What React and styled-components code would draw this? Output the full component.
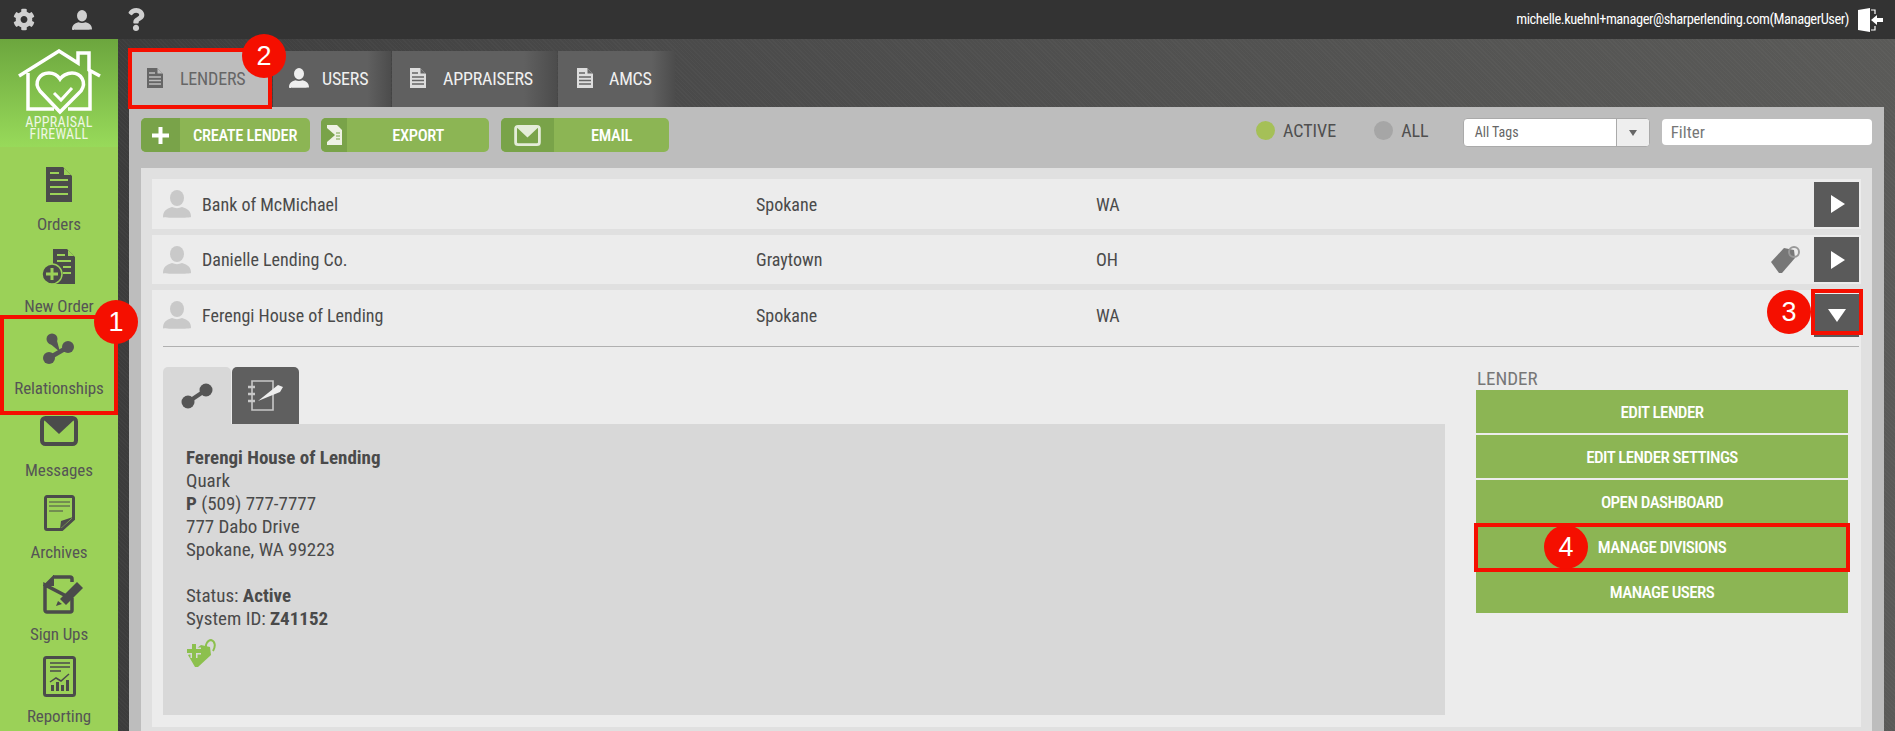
import React from 'react'
import styled, { createGlobalStyle } from 'styled-components'
import { FaCog, FaQuestion } from 'react-icons/fa'

const GlobalStyle = createGlobalStyle`
  html, body { margin: 0; padding: 0; background: #3c3c3c; }
  body { font-family: Roboto, "Liberation Sans", sans-serif; font-stretch: 75%; overflow: hidden; }
  * { box-sizing: border-box; }
`

const Page = styled.div`
  position: relative;
  width: 1895px;
  height: 731px;
  overflow: hidden;
`
const TopBar = styled.header`
  height: 39px;
  background: #333;
  display: flex;
  align-items: center;
  padding: 0 12px 0 13px;
  color: #fff;
`
const TopIcon = styled.span`
  display: flex;
  justify-content: center;
  width: 22px;
  margin-right: ${p => p.$gap}px;
  color: #cfcfcf;
  font-size: 23px;
`
const UserLabel = styled.span`
  margin-left: auto;
  margin-right: 9px;
  font-size: 14.5px;
  letter-spacing: -0.45px;
  color: #fff;
`
const Body = styled.div`
  display: flex;
  height: 692px;
`
const Sidebar = styled.nav`
  width: 118px;
  flex: none;
  background: #9bd158;
`
const Logo = styled.div`
  height: 108px;
  background: linear-gradient(#6ca63e, #98da5a);
  display: flex;
  flex-direction: column;
  align-items: center;
  padding-top: 10px;
  color: #eef7e4;
  font-size: 14px;
  line-height: 12px;
  letter-spacing: 0.3px;
`
const LogoMark = styled.svg`
  width: 83px;
  height: 66px;
  margin-bottom: 1px;
`
const NavList = styled.div`
  padding-top: 8px;
`
const NavItem = styled.div`
  height: 82px;
  display: flex;
  flex-direction: column;
  align-items: center;
  color: #555;
  font-size: 17px;
  letter-spacing: -0.1px;
`
const NavGlyph = styled.div`
  height: 59px;
  display: flex;
  align-items: center;
  justify-content: center;
  margin-left: ${p => p.$shift || 0}px;
`
const Main = styled.main`
  flex: 1;
  padding: 12px 11px 0;
  background:
    repeating-linear-gradient(45deg, rgba(255,255,255,.025) 0 1px, transparent 1px 3px),
    linear-gradient(90deg, #3c3c3c 0, #4a4a4a 30%, #5a5a58 100%);
`
const Tabs = styled.div`
  display: flex;
  height: 56px;
`
const Tab = styled.div`
  display: flex;
  align-items: center;
  width: ${p => p.$width}px;
  padding: 0 0 2px ${p => p.$pad}px;
  margin-right: 1px;
  font-size: 18px;
  letter-spacing: -0.2px;
  color: ${p => (p.$active ? '#666' : '#f0f0f0')};
  background: ${p => (p.$active ? '#bdbdbd' : 'linear-gradient(90deg, #606060 80%, #4c4c4c)')};
  svg { margin-right: ${p => p.$iconGap}px; }
`
const Panel = styled.section`
  background: #bdbdbd;
  height: 624px;
  padding: 0 12px;
`
const Toolbar = styled.div`
  height: 61px;
  display: flex;
  padding-top: 11px;
`
const ActionButton = styled.button`
  display: flex;
  width: ${p => p.$width}px;
  height: 34px;
  margin-right: ${p => p.$gap}px;
  padding: 0;
  border: none;
  border-radius: 5px;
  overflow: hidden;
  background: #8cb554;
  color: #fff;
  font: inherit;
  font-size: 16.5px;
  font-weight: 500;
  letter-spacing: -0.35px;
`
const ActionIcon = styled.span`
  width: ${p => p.$width}px;
  height: 100%;
  flex: none;
  display: flex;
  align-items: center;
  justify-content: center;
  background: #79a349;
`
const ActionText = styled.span`
  flex: 1;
  align-self: center;
  text-align: center;
`
const Radio = styled.div`
  display: flex;
  align-items: center;
  height: 24px;
  margin-left: ${p => p.$left}px;
  font-size: 18px;
  color: #4f4f4f;
  &::before {
    content: '';
    width: 19px;
    height: 19px;
    border-radius: 50%;
    margin-right: 8px;
    background: ${p => (p.$on ? '#a5c057' : '#a6a6a6')};
  }
`
const TagSelect = styled.div`
  display: flex;
  width: 187px;
  height: 29px;
  margin-left: 34px;
  border: 1px solid #aaa;
  border-radius: 4px;
  overflow: hidden;
  background: #fff;
  font-size: 14px;
  color: #666;
`
const TagValue = styled.span`
  flex: 1;
  padding-left: 11px;
  line-height: 27px;
  border-right: 1px solid #aaa;
`
const TagArrow = styled.span`
  width: 32px;
  background: #eee;
  display: flex;
  align-items: center;
  justify-content: center;
  &::after {
    content: '';
    border: 4px solid transparent;
    border-top: 6px solid #666;
    margin-top: 5px;
  }
`
const FilterInput = styled.input`
  width: 210px;
  height: 26px;
  margin: 1px 0 0 12px;
  border: none;
  border-radius: 4px;
  padding: 0 9px;
  font: inherit;
  font-size: 17px;
  &::placeholder { color: #777; opacity: 1; }
`
const RowList = styled.div`
  background: #e0e0e0;
  height: 563px;
  padding: 11px 11px 0;
  display: flex;
  flex-direction: column;
  gap: 6px;
`
const RowBox = styled.div`
  background: #ececec;
  flex: none;
`
const RowHead = styled.div`
  display: grid;
  grid-template-columns: 39px 554px 340px 1fr auto 45px;
  align-items: center;
  height: ${p => p.$height}px;
  padding: 0 2px 0 11px;
  font-size: 18px;
  color: #4a4a4a;
`
const ExpandButton = styled.div`
  width: 45px;
  height: ${p => p.$height}px;
  background: #5a5a5a;
  display: flex;
  align-items: center;
  justify-content: center;
  &::after {
    content: '';
    border-style: solid;
    ${p => p.$open
      ? 'border-width: 13px 9px 0; border-color: #fff transparent transparent;'
      : 'border-width: 9px 0 9px 14px; border-color: transparent transparent transparent #fff; margin-left: 2px;'}
  }
`
const TagSlot = styled.span`
  display: flex;
  margin: 0 13px 2px 0;
`
const Divider = styled.div`
  height: 1px;
  margin: 6px 2px 0 11px;
  background: #b0b0b0;
`
const Detail = styled.div`
  display: flex;
  padding: 20px 13px 12px 11px;
`
const InfoColumn = styled.div`
  width: 1282px;
`
const InfoTabs = styled.div`
  display: flex;
  height: 57px;
`
const InfoTab = styled.div`
  width: ${p => p.$width}px;
  margin-right: 1px;
  border-radius: 5px 5px 0 0;
  background: ${p => (p.$active ? '#d8d8d8' : '#5f5f5f')};
  display: flex;
  align-items: center;
  justify-content: center;
`
const InfoCard = styled.div`
  background: #d8d8d8;
  height: 291px;
  padding: 22px 23px;
  font-size: 19px;
  line-height: 23px;
  color: #4a4a4a;
`
const Gap = styled.div`
  height: 23px;
`
const TagPlus = styled.svg`
  display: block;
  margin-top: 9px;
  width: 30px;
  height: 28px;
`
const ActionColumn = styled.div`
  width: 372px;
  margin-left: 31px;
`
const ColumnTitle = styled.div`
  font-size: 19px;
  line-height: 23px;
  color: #777;
  padding-left: 1px;
`
const ButtonStack = styled.div`
  display: flex;
  flex-direction: column;
  gap: 2px;
`
const StackButton = styled.button`
  height: 43px;
  border: none;
  padding: 0;
  background: #8cb554;
  color: #fff;
  font: inherit;
  font-size: 17px;
  font-weight: 500;
  letter-spacing: -0.55px;
`
const Highlight = styled.div`
  position: absolute;
  left: ${p => p.$x}px;
  top: ${p => p.$y}px;
  width: ${p => p.$w}px;
  height: ${p => p.$h}px;
  border: 4px solid #f50f00;
`
const Marker = styled.div`
  position: absolute;
  left: ${p => p.$x - 22}px;
  top: ${p => p.$y - 22}px;
  width: 44px;
  height: 44px;
  border-radius: 50%;
  background: #f50f00;
  color: #fff;
  font-family: "Liberation Sans", Arial, sans-serif;
  font-stretch: normal;
  font-size: 27px;
  line-height: 44px;
  text-align: center;
`

const DocIcon = ({ size = 20, color = '#ddd', line = '#666' }) => (
  <svg width={size * 0.8} height={size} viewBox="0 0 16 20">
    <path d="M0 0h10l6 6v14H0z" fill={color} />
    <path d="M10.500 0.500l5 5h-5z" fill={line} />
    <path d="M2 5h6M2 9h12M2 12.500h12M2 16h12" stroke={line} strokeWidth="1.400" />
  </svg>
)

const PersonIcon = ({ size = 28, color = '#c9c9c9' }) => (
  <svg width={size} height={size} viewBox="0 0 28 28">
    <ellipse cx="14" cy="8" rx="7" ry="8" fill={color} />
    <path d="M0 27c0-6 3-8 9-10 3 1.500 7 1.500 10 0 6 2 9 4 9 10 0 1-28 1-28 0z" fill={color} />
  </svg>
)

const LinkIcon = ({ color = '#555' }) => (
  <svg width="32" height="32" viewBox="0 0 32 32">
    <path d="M6 25L25 14" stroke={color} strokeWidth="4.500" />
    <path d="M5 9l8-5 4 15z" fill={color} />
    <circle cx="6" cy="25" r="6" fill={color} />
    <circle cx="25" cy="14" r="6" fill={color} />
    <circle cx="9" cy="6" r="5.500" fill={color} />
  </svg>
)

const PlainLinkIcon = ({ color = '#555' }) => (
  <svg width="32" height="26" viewBox="0 0 32 26">
    <path d="M7 19L25 7" stroke={color} strokeWidth="4" />
    <circle cx="7" cy="19" r="6.500" fill={color} />
    <circle cx="25" cy="7" r="6.500" fill={color} />
  </svg>
)

const NotebookIcon = () => (
  <svg width="38" height="34" viewBox="0 0 38 34">
    <path d="M5 2h21v29H5z" fill="none" stroke="#c8c8c8" strokeWidth="1.600" />
    <path d="M1 8h7M1 15h7M1 22h7" stroke="#c8c8c8" strokeWidth="2.500" />
    <path d="M11 22L31 6l5 2-3 5-22 9z" fill="#eee" />
  </svg>
)

const OrdersIcon = () => (
  <svg width="26" height="35" viewBox="0 0 26 35">
    <path d="M0 0h17l9 9v26H0z" fill="#4b4b4b" />
    <path d="M18 1l7 7h-7z" fill="#9bd158" />
    <path d="M4 6h9M4 13h18M4 20h18M4 27h18" stroke="#9bd158" strokeWidth="2" />
  </svg>
)

const NewOrderIcon = () => (
  <svg width="34" height="36" viewBox="0 0 34 36">
    <path d="M11 0h14l8 8v27H11z" fill="#4b4b4b" />
    <path d="M26 1l6 6h-6z" fill="#9bd158" />
    <path d="M15 6h8M15 12h14M21 18h8M21 24h8" stroke="#9bd158" strokeWidth="2" />
    <circle cx="10" cy="25" r="10" fill="#4b4b4b" stroke="#9bd158" strokeWidth="1.500" />
    <path d="M10 19v12M4 25h12" stroke="#9bd158" strokeWidth="3" />
  </svg>
)

const MailIcon = ({ width = 38, height = 30, color = '#4b4b4b' }) => (
  <svg width={width} height={height} viewBox="0 0 38 30">
    <rect x="2" y="2" width="34" height="26" rx="3.500" fill="none" stroke={color} strokeWidth="4" />
    <path d="M3 3h32L19 18z" fill={color} />
  </svg>
)

const ArchiveIcon = () => (
  <svg width="31" height="36" viewBox="0 0 31 36">
    <path d="M3 1.500h25a1.500 1.500 0 0 1 1.500 1.500v21L18 34.500H3A1.500 1.500 0 0 1 1.500 33V3A1.500 1.500 0 0 1 3 1.500z" fill="none" stroke="#4b4b4b" strokeWidth="3" />
    <path d="M5 7h21M5 11h21M5 16h14" stroke="#4b4b4b" strokeWidth="1" />
    <path d="M16 34l1-8 12-4z" fill="#4b4b4b" />
  </svg>
)

const SignUpIcon = () => (
  <svg width="41" height="39" viewBox="0 0 41 39">
    <path d="M10 2h17a2 2 0 0 1 2 2v3M29 24v11a2 2 0 0 1-2 2H4a2 2 0 0 1-2-2V10z" fill="none" stroke="#4b4b4b" strokeWidth="3.500" />
    <path d="M2 10l8-8v8z" fill="#4b4b4b" stroke="#4b4b4b" strokeWidth="2" />
    <path d="M17 24L34 7l6 6-17 17z" fill="#4b4b4b" />
    <path d="M13 31l2-5 4 3z" fill="#4b4b4b" />
  </svg>
)

const ReportIcon = () => (
  <svg width="33" height="41" viewBox="0 0 33 41">
    <rect x="1.500" y="1.500" width="30" height="38" rx="2" fill="none" stroke="#4b4b4b" strokeWidth="3" />
    <path d="M7 7h20M7 11h20M7 15h11" stroke="#4b4b4b" strokeWidth="1.500" />
    <path d="M7 26l6-4 5 3 8-7" fill="none" stroke="#4b4b4b" strokeWidth="1.500" />
    <path d="M8 29h3v6H8zM13 26h3v9h-3zM18 29h3v6h-3zM23 24h3v11h-3z" fill="#4b4b4b" />
  </svg>
)

const TagIcon = () => (
  <svg width="30" height="28" viewBox="0 0 30 28">
    <path d="M0 17L13 3l10 2 1 8-13 15H8z" fill="#777" />
    <circle cx="23" cy="7" r="5" fill="none" stroke="#999" strokeWidth="2" />
  </svg>
)

const ExportIcon = () => (
  <svg width="15" height="20" viewBox="0 0 15 20">
    <path d="M0 0h10l5 5v15H0z" fill="#eef2e4" />
    <path d="M0 3l8 7-8 7z" fill="#79a349" />
    <path d="M9 8h4M9 11h4M9 14h4" stroke="#79a349" strokeWidth="1.200" />
  </svg>
)

const DoorIcon = () => (
  <svg width="25" height="24" viewBox="0 0 25 24">
    <path d="M0 2l12-2v24L0 22z" fill="#fff" />
    <path d="M13 2h4v4M17 18v4h-4" fill="none" stroke="#fff" strokeWidth="1.200" />
    <path d="M13 12l6-5v3h6v4h-6v3z" fill="#fff" />
  </svg>
)

const LogoSvg = () => (
  <LogoMark viewBox="0 0 83 66">
    <path d="M1 27L41 2l19 12V4h11v17l11 6" fill="none" stroke="#fff" strokeWidth="3.500" />
    <path d="M10 24v36h26M72 22v38H50" fill="none" stroke="#fff" strokeWidth="3.500" />
    <path d="M42 63L22 42c-7-9 0-18 9-18 5 0 9 3 11 6 2-3 7-6 12-6 9 0 15 9 9 18L42 63z" fill="none" stroke="#fff" strokeWidth="3.500" />
    <path d="M36 44l7 7 11-12" fill="none" stroke="#fff" strokeWidth="3" />
  </LogoMark>
)

const navItems = [
  { label: 'Orders', icon: <OrdersIcon /> },
  { label: 'New Order', icon: <NewOrderIcon /> },
  { label: 'Relationships', icon: <LinkIcon /> },
  { label: 'Messages', icon: <MailIcon /> },
  { label: 'Archives', icon: <ArchiveIcon /> },
  { label: 'Sign Ups', icon: <SignUpIcon />, shift: 8 },
  { label: 'Reporting', icon: <ReportIcon /> },
]

const lenderActions = ['EDIT LENDER', 'EDIT LENDER SETTINGS', 'OPEN DASHBOARD', 'MANAGE DIVISIONS', 'MANAGE USERS']

const Row = ({ name, city, state, tag, height }) => (
  <RowBox>
    <RowHead $height={height}>
      <PersonIcon />
      <span>{name}</span>
      <span>{city}</span>
      <span>{state}</span>
      {tag ? <TagSlot><TagIcon /></TagSlot> : <span />}
      <ExpandButton $height={45} />
    </RowHead>
  </RowBox>
)

export default function App() {
  return (
    <Page>
      <GlobalStyle />
      <TopBar>
        <TopIcon $gap={36}><FaCog /></TopIcon>
        <TopIcon $gap={32}><PersonIcon size={20} color="#cfcfcf" /></TopIcon>
        <TopIcon $gap={0}><FaQuestion /></TopIcon>
        <UserLabel>michelle.kuehnl+manager@sharperlending.com(ManagerUser)</UserLabel>
        <DoorIcon />
      </TopBar>
      <Body>
        <Sidebar>
          <Logo>
            <LogoSvg />
            <span>APPRAISAL</span>
            <span>FIREWALL</span>
          </Logo>
          <NavList>
            {navItems.map(item => (
              <NavItem key={item.label}>
                <NavGlyph $shift={item.shift}>{item.icon}</NavGlyph>
                {item.label}
              </NavItem>
            ))}
          </NavList>
        </Sidebar>
        <Main>
          <Tabs>
            <Tab $active $width={143} $pad={18} $iconGap={17}><DocIcon color="#666" line="#bdbdbd" />LENDERS</Tab>
            <Tab $width={118} $pad={16} $iconGap={13}><PersonIcon size={20} color="#eee" />USERS</Tab>
            <Tab $width={165} $pad={18} $iconGap={17}><DocIcon />APPRAISERS</Tab>
            <Tab $width={117} $pad={19} $iconGap={16}><DocIcon />AMCS</Tab>
          </Tabs>
          <Panel>
            <Toolbar>
              <ActionButton $width={169} $gap={11}>
                <ActionIcon $width={39}>
                  <svg width="17" height="17" viewBox="0 0 17 17"><path d="M8.500 0v17M0 8.500h17" stroke="#fff" strokeWidth="4" /></svg>
                </ActionIcon>
                <ActionText>CREATE LENDER</ActionText>
              </ActionButton>
              <ActionButton $width={168} $gap={12}>
                <ActionIcon $width={26}><ExportIcon /></ActionIcon>
                <ActionText>EXPORT</ActionText>
              </ActionButton>
              <ActionButton $width={168} $gap={11}>
                <ActionIcon $width={53}><MailIcon width={27} height={21} color="#e4ecd8" /></ActionIcon>
                <ActionText>EMAIL</ActionText>
              </ActionButton>
              <Radio $on $left={576}>ACTIVE</Radio>
              <Radio $left={38}>ALL</Radio>
              <TagSelect>
                <TagValue>All Tags</TagValue>
                <TagArrow />
              </TagSelect>
              <FilterInput placeholder="Filter" />
            </Toolbar>
            <RowList>
              <Row name="Bank of McMichael" city="Spokane" state="WA" height={50} />
              <Row name="Danielle Lending Co." city="Graytown" state="OH" tag height={49} />
              <RowBox>
                <RowHead $height={50}>
                  <PersonIcon />
                  <span>Ferengi House of Lending</span>
                  <span>Spokane</span>
                  <span>WA</span>
                  <span />
                  <ExpandButton $height={43} $open />
                </RowHead>
                <Divider />
                <Detail>
                  <InfoColumn>
                    <InfoTabs>
                      <InfoTab $active $width={68}><PlainLinkIcon /></InfoTab>
                      <InfoTab $width={67}><NotebookIcon /></InfoTab>
                    </InfoTabs>
                    <InfoCard>
                      <div><b>Ferengi House of Lending</b></div>
                      <div>Quark</div>
                      <div><b>P</b> (509) 777-7777</div>
                      <div>777 Dabo Drive</div>
                      <div>Spokane, WA 99223</div>
                      <Gap />
                      <div>Status: <b>Active</b></div>
                      <div>System ID: <b>Z41152</b></div>
                      <TagPlus viewBox="0 0 30 28">
                        <path d="M2 16L15 6l9 2 1 8-13 12h-3z" fill="#8cc04d" />
                        <path d="M8 5v14M1 12h14" stroke="#d8d8d8" strokeWidth="7" />
                        <path d="M8 5v14M1 12h14" stroke="#8cc04d" strokeWidth="4" />
                        <path d="M21 11c-3-5 1-10 4-10 4 1 5 6 2 11" fill="none" stroke="#8cc04d" strokeWidth="2" />
                      </TagPlus>
                    </InfoCard>
                  </InfoColumn>
                  <ActionColumn>
                    <ColumnTitle>LENDER</ColumnTitle>
                    <ButtonStack>
                      {lenderActions.map(a => <StackButton key={a}>{a}</StackButton>)}
                    </ButtonStack>
                  </ActionColumn>
                </Detail>
              </RowBox>
            </RowList>
          </Panel>
        </Main>
      </Body>
      <Highlight $x={0} $y={315} $w={118} $h={100} />
      <Marker $x={116} $y={322}>1</Marker>
      <Highlight $x={128} $y={48} $w={144} $h={61} />
      <Marker $x={264} $y={56}>2</Marker>
      <Highlight $x={1811} $y={289} $w={52} $h={46} />
      <Marker $x={1789} $y={312}>3</Marker>
      <Highlight $x={1474} $y={523} $w={376} $h={49} />
      <Marker $x={1566} $y={547}>4</Marker>
    </Page>
  )
}
